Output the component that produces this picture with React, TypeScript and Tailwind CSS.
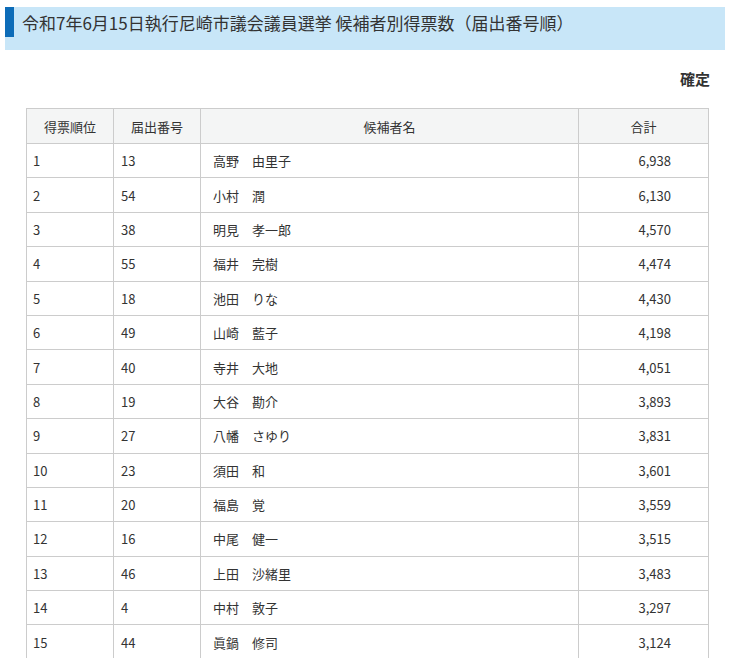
const rows: [number, number, string, string][] = [
  [1, 13, "高野　由里子", "6,938"],
  [2, 54, "小村　潤", "6,130"],
  [3, 38, "明見　孝一郎", "4,570"],
  [4, 55, "福井　完樹", "4,474"],
  [5, 18, "池田　りな", "4,430"],
  [6, 49, "山崎　藍子", "4,198"],
  [7, 40, "寺井　大地", "4,051"],
  [8, 19, "大谷　勘介", "3,893"],
  [9, 27, "八幡　さゆり", "3,831"],
  [10, 23, "須田　和", "3,601"],
  [11, 20, "福島　覚", "3,559"],
  [12, 16, "中尾　健一", "3,515"],
  [13, 46, "上田　沙緒里", "3,483"],
  [14, 4, "中村　敦子", "3,297"],
  [15, 44, "眞鍋　修司", "3,124"],
];

export default function App() {
  return (
    <div className="w-[756px] h-[658px] overflow-hidden bg-white pt-[7px] pl-[5px] text-[#333] font-['Noto_Sans_CJK_JP',sans-serif]">
      {/* Title band */}
      <div className="w-[720px] h-[43px] bg-[#c8e6f8] flex items-start">
        <div className="w-[9px] h-[30px] bg-[#0d6cb8]" />
        <h1 className="ml-[8px] h-[30px] flex items-center text-[17px] leading-none text-[#333]">
          令和7年6月15日執行尼崎市議会議員選挙 候補者別得票数（届出番号順）
        </h1>
      </div>

      <div className="w-[705px] flex justify-end mt-[21px]">
        <p className="text-[15px] font-semibold leading-none">確定</p>
      </div>

      {/* Result table */}
      <table className="ml-[21px] mt-[22px] border-collapse text-[13px] leading-none">
        <thead>
          <tr className="bg-[#f4f5f5]">
            <th className="w-[87px] h-[35px] border border-[#cccccc] font-normal text-center">得票順位</th>
            <th className="w-[87px] h-[35px] border border-[#cccccc] font-normal text-center">届出番号</th>
            <th className="w-[378px] h-[35px] border border-[#cccccc] font-normal text-center">候補者名</th>
            <th className="w-[130px] h-[35px] border border-[#cccccc] font-normal text-center">合計</th>
          </tr>
        </thead>
        <tbody>
          {rows.map(([rank, no, name, votes]) => (
            <tr key={rank}>
              <td className="h-[34.4px] border border-[#cccccc] pl-[6px] text-left">{rank}</td>
              <td className="h-[34.4px] border border-[#cccccc] pl-[7px] text-left">{no}</td>
              <td className="h-[34.4px] border border-[#cccccc] pl-[12px] text-left">{name}</td>
              <td className="h-[34.4px] border border-[#cccccc] pr-[37px] text-right">{votes}</td>
            </tr>
          ))}
        </tbody>
      </table>
    </div>
  );
}
